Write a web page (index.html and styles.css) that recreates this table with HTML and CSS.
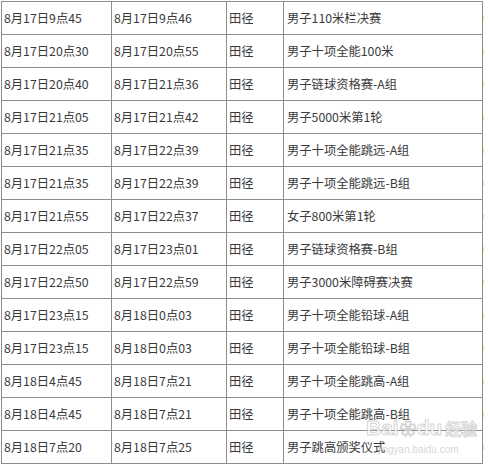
FILE: index.html
```html
<!DOCTYPE html>
<html lang="zh-CN">
<head>
<meta charset="utf-8">
<title>赛程</title>
<link rel="stylesheet" href="styles.css">
</head>
<body>
<div class="wrap">
<table class="schedule">
<colgroup>
<col class="c1"><col class="c2"><col class="c3"><col class="c4"><col class="c5">
</colgroup>
<tbody>
<tr><td>8月17日9点45</td><td>8月17日9点46</td><td>田径</td><td>男子110米栏决赛</td><td class="edge"><span class="mark"></span></td></tr>
<tr><td>8月17日20点30</td><td>8月17日20点55</td><td>田径</td><td>男子十项全能100米</td><td class="edge"><span class="mark"></span></td></tr>
<tr><td>8月17日20点40</td><td>8月17日21点36</td><td>田径</td><td>男子链球资格赛-A组</td><td class="edge"><span class="mark"></span></td></tr>
<tr><td>8月17日21点05</td><td>8月17日21点42</td><td>田径</td><td>男子5000米第1轮</td><td class="edge"><span class="mark"></span></td></tr>
<tr><td>8月17日21点35</td><td>8月17日22点39</td><td>田径</td><td>男子十项全能跳远-A组</td><td class="edge"><span class="mark"></span></td></tr>
<tr><td>8月17日21点35</td><td>8月17日22点39</td><td>田径</td><td>男子十项全能跳远-B组</td><td class="edge"><span class="mark"></span></td></tr>
<tr><td>8月17日21点55</td><td>8月17日22点37</td><td>田径</td><td>女子800米第1轮</td><td class="edge"><span class="mark"></span></td></tr>
<tr><td>8月17日22点05</td><td>8月17日23点01</td><td>田径</td><td>男子链球资格赛-B组</td><td class="edge"><span class="mark"></span></td></tr>
<tr><td>8月17日22点50</td><td>8月17日22点59</td><td>田径</td><td>男子3000米障碍赛决赛</td><td class="edge"><span class="mark"></span></td></tr>
<tr><td>8月17日23点15</td><td>8月18日0点03</td><td>田径</td><td>男子十项全能铅球-A组</td><td class="edge"><span class="mark"></span></td></tr>
<tr><td>8月17日23点15</td><td>8月18日0点03</td><td>田径</td><td>男子十项全能铅球-B组</td><td class="edge"><span class="mark"></span></td></tr>
<tr><td>8月18日4点45</td><td>8月18日7点21</td><td>田径</td><td>男子十项全能跳高-A组</td><td class="edge"><span class="mark"></span></td></tr>
<tr><td>8月18日4点45</td><td>8月18日7点21</td><td>田径</td><td>男子十项全能跳高-B组</td><td class="edge"><span class="mark"></span></td></tr>
<tr><td>8月18日7点20</td><td>8月18日7点25</td><td>田径</td><td>男子跳高颁奖仪式</td><td class="edge"><span class="mark"></span></td></tr>
</tbody>
</table>
<div class="watermark">
  <div class="wm-logo">Bai<span class="paw">&#10047;</span>du<span class="wm-cn">经验</span></div>
  <div class="wm-url">jingyan.baidu.com</div>
</div>
</div>
</body>
</html>
```

FILE: styles.css
```css
html, body {
  margin: 0;
  padding: 0;
  background: #ffffff;
}

.wrap {
  position: relative;
  width: 484px;
  height: 465px;
  overflow: hidden;
  padding: 1px 0 0 1px;
  box-sizing: border-box;
}

.schedule {
  border-collapse: collapse;
  table-layout: fixed;
  width: 484px;
  font-family: "Noto Sans CJK SC", "Microsoft YaHei", sans-serif;
  font-size: 12.3px;
  color: #3a3a3a;
}

.c1 { width: 110px; }
.c2 { width: 115px; }
.c3 { width: 57px; }
.c4 { width: 199px; }
.c5 { width: 3px; }

.schedule td {
  border: 1px solid #8e8e8e;
  height: 32px;
  padding: 0 0 0 2px;
  vertical-align: middle;
  white-space: nowrap;
  overflow: hidden;
  line-height: 16px;
}

.schedule td:nth-child(4) {
  padding-left: 3px;
}

.schedule td.edge {
  border-top: none;
  border-bottom: none;
  border-right: none;
  padding: 0;
  line-height: 0;
}

.mark {
  display: inline-block;
  width: 2px;
  height: 5px;
  background: #f3dc9e;
}

.watermark {
  position: absolute;
  left: 366px;
  top: 417px;
  font-family: "Liberation Sans", Arial, sans-serif;
  color: rgba(255, 255, 255, 0.7);
  pointer-events: none;
}

.wm-logo {
  font-size: 21px;
  font-weight: bold;
  line-height: 22px;
  -webkit-text-stroke: 1px rgba(175, 175, 175, 0.55);
}

.paw {
  font-size: 16px;
  margin: 0 1px;
}

.wm-cn {
  font-family: "Noto Sans CJK SC", sans-serif;
  font-size: 16px;
  margin-left: 3px;
}

.wm-url {
  font-size: 10px;
  line-height: 12px;
  margin: 3px 0 0 12px;
  color: rgba(185, 185, 185, 0.6);
}
```
